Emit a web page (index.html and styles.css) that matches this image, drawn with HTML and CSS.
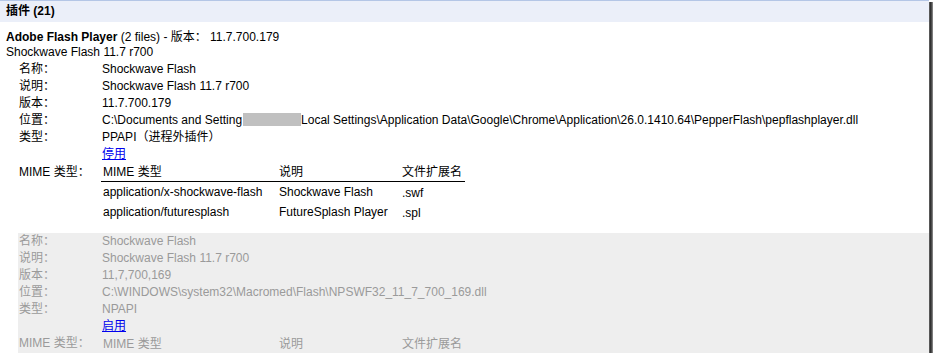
FILE: index.html
```html
<!DOCTYPE html>
<html lang="zh-CN">
<head>
  <meta charset="UTF-8">
  <title>插件</title>
  <link rel="stylesheet" href="styles.css">
</head>
<body>
  <div class="frame">
    <div class="page">
      <div class="section-title">插件 (21)</div>

      <div class="plugin">
        <div class="plugin-name"><strong>Adobe Flash Player</strong> (2 files) - 版本： 11.7.700.179</div>
        <div class="plugin-desc">Shockwave Flash 11.7 r700</div>

        <div class="details">
          <div class="label">名称：</div>
          <div class="value">Shockwave Flash</div>
          <div class="label">说明：</div>
          <div class="value">Shockwave Flash 11.7 r700</div>
          <div class="label">版本：</div>
          <div class="value">11.7.700.179</div>
          <div class="label">位置：</div>
          <div class="value">C:\Documents and Setting<span class="redacted"></span>Local Settings\Application Data\Google\Chrome\Application\26.0.1410.64\PepperFlash\pepflashplayer.dll</div>
          <div class="label">类型：</div>
          <div class="value">PPAPI（进程外插件）</div>
          <div class="label"></div>
          <div class="value"><a href="#">停用</a></div>
          <div class="label mime-label">MIME 类型：</div>
          <div class="value">
            <table class="mime">
              <tr><th>MIME 类型</th><th>说明</th><th>文件扩展名</th></tr>
              <tr><td>application/x-shockwave-flash</td><td>Shockwave Flash</td><td class="ext">.swf</td></tr>
              <tr><td>application/futuresplash</td><td>FutureSplash Player</td><td class="ext">.spl</td></tr>
            </table>
          </div>
        </div>

        <div class="details disabled">
          <div class="label">名称：</div>
          <div class="value">Shockwave Flash</div>
          <div class="label">说明：</div>
          <div class="value">Shockwave Flash 11.7 r700</div>
          <div class="label">版本：</div>
          <div class="value">11,7,700,169</div>
          <div class="label">位置：</div>
          <div class="value">C:\WINDOWS\system32\Macromed\Flash\NPSWF32_11_7_700_169.dll</div>
          <div class="label">类型：</div>
          <div class="value">NPAPI</div>
          <div class="label"></div>
          <div class="value"><a href="#">启用</a></div>
          <div class="label">MIME 类型：</div>
          <div class="value">
            <table class="mime">
              <tr><th>MIME 类型</th><th>说明</th><th>文件扩展名</th></tr>
            </table>
          </div>
        </div>
      </div>
    </div>
    <div class="edge"></div>
  </div>
</body>
</html>
```

FILE: styles.css
```css
html, body {
  margin: 0;
  padding: 0;
  height: 100%;
  overflow: hidden;
}

body {
  background: #fff;
  color: #000;
  font-family: "Liberation Sans", Arial, "Noto Sans CJK SC", sans-serif;
  font-size: 12px;
}

.frame {
  display: flex;
  height: 100%;
}

.page {
  flex: 1;
  min-width: 0;
}

.edge {
  width: 4px;
  margin-top: 2px;
  background: linear-gradient(90deg, #6a6a6a 0%, #2e2e2e 40%, #555 70%, #9a9a9a 100%);
}

.section-title {
  border-top: 1px solid #b4c6e6;
  background: #ebeff9;
  height: 21px;
  line-height: 21px;
  padding-left: 6px;
  font-weight: bold;
}

.plugin {
  padding-top: 8px;
}

.plugin-name,
.plugin-desc {
  line-height: 15px;
  padding-left: 6px;
  white-space: nowrap;
}

.details {
  display: grid;
  grid-template-columns: 83px 1fr;
  grid-auto-rows: minmax(17px, auto);
  margin: 1px 0 0 18px;
  padding-left: 1px;
  line-height: 17px;
  white-space: nowrap;
}

.details.disabled {
  margin-top: 11px;
  background: #eeeeee;
  color: #9a9a9a;
}

.redacted {
  display: inline-block;
  width: 58px;
  height: 13px;
  margin-left: 1px;
  vertical-align: -2px;
  background: #c0c0c0;
}

a {
  color: #0000ee;
  text-decoration: underline;
}

.mime-label {
  line-height: 18px;
}

.mime {
  border-collapse: collapse;
  margin-left: -1px;
}

.mime th {
  font-weight: normal;
  text-align: left;
  height: 18px;
  line-height: 18px;
  padding: 0 2px;
  border-bottom: 1px solid #000;
}

.mime td {
  height: 20px;
  line-height: 20px;
  padding: 0 2px;
  vertical-align: middle;
}

.mime th:nth-child(1), .mime td:nth-child(1) { width: 172px; }
.mime th:nth-child(2), .mime td:nth-child(2) { width: 119px; }
.mime th:nth-child(3), .mime td:nth-child(3) { width: 61px; }

.mime .ext {
  vertical-align: bottom;
  line-height: 18px;
}

.disabled .mime th {
  border-bottom: none;
}
```
